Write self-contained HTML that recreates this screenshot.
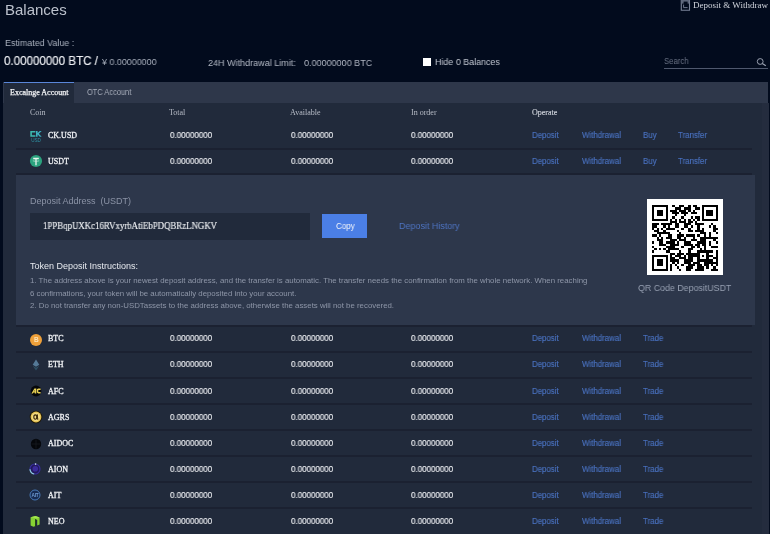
<!DOCTYPE html>
<html><head><meta charset="utf-8">
<style>
*{margin:0;padding:0;box-sizing:border-box}
html,body{width:770px;height:534px;overflow:hidden;background:#020b1d;font-family:"Liberation Sans",sans-serif;color:#c9ced8}
.abs{position:absolute;white-space:nowrap;will-change:transform}
.serif{font-family:"Liberation Serif",serif}
#title{left:4.5px;top:0.6px;font-size:15px;line-height:18px;color:#bcc2cd}
#dw{left:693px;top:0px;font-size:9px;line-height:10px;color:#d0d4dc}
#est{left:5px;top:37.5px;font-size:9.6px;line-height:10px;color:#aab1be;transform:scaleX(0.93);transform-origin:0 0}
#btc{left:4.3px;top:55px;font-size:12.2px;line-height:13px;color:#eef0f4;-webkit-text-stroke:0.15px currentColor;transform:scaleX(0.95);transform-origin:0 0}
#cny{left:102px;top:56.7px;font-size:9.3px;line-height:10px;color:#a7aebb;transform:scaleX(0.96);transform-origin:0 0}
#lim{left:208px;top:57.8px;font-size:9.5px;line-height:10px;color:#b3b9c5;transform:scaleX(0.95);transform-origin:0 0}
#lim2{left:303.6px;top:57.8px;font-size:9.5px;line-height:10px;color:#b3b9c5;transform:scaleX(0.95);transform-origin:0 0}
#chk{left:423px;top:58px;width:8px;height:8px;background:#fff}
#hide{left:435px;top:57.2px;font-size:9.4px;line-height:10px;color:#c3c8d2;transform:scaleX(0.95);transform-origin:0 0}
#search{left:663.5px;top:56.6px;font-size:8.6px;line-height:9px;color:#6a7284;transform:scaleX(0.9);transform-origin:0 0}
#sline{left:663.5px;top:68.2px;width:104px;height:1px;background:#4f586d}
#panel{left:3px;top:82px;width:765px;height:460px;background:#212a3b}
#tabs{left:3px;top:82px;width:765px;height:21px;background:#2e374a}
#tab1{left:4px;top:82px;width:70px;height:21px;background:#212a3b;border-top:1px solid #5a86d8}
.tabt{font-size:8px;line-height:9px}
.bold{-webkit-text-stroke:0.25px currentColor}
.th{font-size:8px;line-height:9px;color:#b7bcc7}
.td{font-size:8.6px;line-height:9px;color:#eceef2;-webkit-text-stroke:0.15px currentColor;transform:scaleX(0.93);transform-origin:0 0}
.coin{font-size:8px;line-height:9px;color:#f0f2f5;-webkit-text-stroke:0.3px currentColor}
.lnk{font-size:8.5px;line-height:9px;color:#4a72c0;-webkit-text-stroke:0.15px currentColor;transform:scaleX(0.925);transform-origin:0 0}
.sep{left:16px;width:736px;height:1.8px;background:#1b2131}
#dep{left:16px;top:175px;width:739px;height:150px;background:#2d374b}
</style></head><body>
<div class="abs" id="title">Balances</div>
<svg class="abs" style="left:680px;top:0px" width="11" height="12" viewBox="0 0 11 12"><path d="M1.3 -1 V10.2 H9.5 V-1" fill="none" stroke="#7a8398" stroke-width="1.1"/><rect x="1.5" y="0" width="7.8" height="3.6" fill="#5d667b"/><rect x="3.6" y="1.6" width="4" height="6.2" fill="#020b1d"/><path d="M3.6 4.6 V7.6 H7.6" fill="none" stroke="#7a8398" stroke-width="0.9"/></svg>
<div class="abs serif" id="dw">Deposit &amp; Withdraw</div>
<div class="abs" id="est">Estimated Value :</div>
<div class="abs" id="btc">0.00000000 BTC /</div>
<div class="abs" id="cny">¥ 0.00000000</div>
<div class="abs" id="lim">24H Withdrawal Limit:</div>
<div class="abs" id="lim2">0.00000000 BTC</div>
<div class="abs" id="chk"></div>
<div class="abs" id="hide">Hide 0 Balances</div>
<div class="abs" id="search">Search</div>
<div class="abs" id="sline"></div>
<svg class="abs" style="left:755px;top:57px" width="12" height="10" viewBox="0 0 12 10"><circle cx="5.2" cy="4.5" r="2.9" fill="none" stroke="#9aa1b0" stroke-width="1"/><path d="M7.3 6.6 L10.8 8.8" stroke="#9aa1b0" stroke-width="1.2"/></svg>

<div class="abs" id="panel"></div>
<div class="abs" style="left:761.5px;top:103px;width:6.5px;height:431px;background:#242c3e"></div>
<div class="abs" id="tabs"></div>
<div class="abs" id="tab1"></div>
<div class="abs serif tabt bold" style="left:10px;top:88.3px;color:#f4f5f7">Excalnge Account</div>
<div class="abs tabt" style="left:86.7px;top:88px;font-size:8.2px;color:#a9afbc;transform:scaleX(0.91);transform-origin:0 0">OTC Account</div>

<div class="abs serif th" style="left:30px;top:108px">Coin</div>
<div class="abs serif th" style="left:169px;top:108.3px">Total</div>
<div class="abs serif th" style="left:290px;top:108px">Available</div>
<div class="abs serif th" style="left:411px;top:108px">In order</div>
<div class="abs serif th" style="left:532px;top:108.3px;color:#d3d7df;-webkit-text-stroke:0.12px currentColor">Operate</div>

<svg class="abs" style="left:28.9px;top:129px" width="14" height="14" viewBox="0 0 14 14"><path d="M6.4 1.9 H1.3 V7.8 H6.4 V6.3 H2.9 V3.4 H6.4 Z" fill="#3cb8ae"/><path d="M7 1.9 H8.6 V4.1 L10.8 1.9 H12.7 L9.8 4.85 L12.7 7.8 H10.8 L8.6 5.6 V7.8 H7 Z" fill="#3cb0c0"/><text x="7" y="12.5" text-anchor="middle" font-family="Liberation Sans" font-size="4.6" fill="#2f92a4" style="-webkit-text-stroke:0.25px #2f92a4">USD</text></svg>
<div class="abs coin serif" style="left:48px;top:131.0px">CK.USD</div>
<div class="abs td" style="left:170px;top:131.0px">0.00000000</div>
<div class="abs td" style="left:290.5px;top:131.0px">0.00000000</div>
<div class="abs td" style="left:411px;top:131.0px">0.00000000</div>
<div class="abs lnk" style="left:531.5px;top:131.0px">Deposit</div>
<div class="abs lnk" style="left:581.5px;top:131.0px">Withdrawal</div>
<div class="abs lnk" style="left:642.5px;top:131.0px">Buy</div>
<div class="abs lnk" style="left:677.5px;top:131.0px">Transfer</div>
<div class="abs sep" style="top:147.6px"></div>
<svg class="abs" style="left:28.700000000000003px;top:154px" width="14" height="14" viewBox="0 0 14 14"><circle cx="7" cy="7" r="6.1" fill="#2ba27e"/><path d="M4.2 4.4 H9.8 M7 4.4 V11.2" stroke="#e8f5ef" stroke-width="1.3"/><ellipse cx="7" cy="6.6" rx="3.1" ry="0.9" fill="none" stroke="#cfeadf" stroke-width="0.5"/></svg>
<div class="abs coin serif" style="left:48px;top:157.0px">USDT</div>
<div class="abs td" style="left:170px;top:157.0px">0.00000000</div>
<div class="abs td" style="left:290.5px;top:157.0px">0.00000000</div>
<div class="abs td" style="left:411px;top:157.0px">0.00000000</div>
<div class="abs lnk" style="left:531.5px;top:157.0px">Deposit</div>
<div class="abs lnk" style="left:581.5px;top:157.0px">Withdrawal</div>
<div class="abs lnk" style="left:642.5px;top:157.0px">Buy</div>
<div class="abs lnk" style="left:677.5px;top:157.0px">Transfer</div>
<div class="abs sep" style="top:172.5px"></div>
<svg class="abs" style="left:28.6px;top:332.6px" width="14" height="14" viewBox="0 0 14 14"><circle cx="7" cy="7" r="6" fill="#eea03a"/><text x="7.3" y="9.4" text-anchor="middle" font-family="Liberation Sans" font-weight="bold" font-size="6.5" fill="#fbe3b8">B</text></svg>
<div class="abs coin serif" style="left:48px;top:334.4px">BTC</div>
<div class="abs td" style="left:170px;top:334.4px">0.00000000</div>
<div class="abs td" style="left:290.5px;top:334.4px">0.00000000</div>
<div class="abs td" style="left:411px;top:334.4px">0.00000000</div>
<div class="abs lnk" style="left:531.5px;top:334.4px">Deposit</div>
<div class="abs lnk" style="left:581.5px;top:334.4px">Withdrawal</div>
<div class="abs lnk" style="left:642.5px;top:334.4px">Trade</div>
<div class="abs sep" style="top:350.9px"></div>
<svg class="abs" style="left:28.799999999999997px;top:358px" width="14" height="14" viewBox="0 0 14 14"><path d="M7 1.5 L10.3 6.8 L7 8.8 L3.7 6.8 Z" fill="#557997"/><path d="M7 9.7 L10.3 7.7 L7 12.6 L3.7 7.7 Z" fill="#2f5166"/></svg>
<div class="abs coin serif" style="left:48px;top:360.47999999999996px">ETH</div>
<div class="abs td" style="left:170px;top:360.47999999999996px">0.00000000</div>
<div class="abs td" style="left:290.5px;top:360.47999999999996px">0.00000000</div>
<div class="abs td" style="left:411px;top:360.47999999999996px">0.00000000</div>
<div class="abs lnk" style="left:531.5px;top:360.47999999999996px">Deposit</div>
<div class="abs lnk" style="left:581.5px;top:360.47999999999996px">Withdrawal</div>
<div class="abs lnk" style="left:642.5px;top:360.47999999999996px">Trade</div>
<div class="abs sep" style="top:376.97999999999996px"></div>
<svg class="abs" style="left:29px;top:384.3px" width="14" height="14" viewBox="0 0 14 14"><circle cx="7" cy="7" r="5.4" fill="#05070a"/><path d="M2.4 9.4 L5.4 4.6 H7.3 V9.4 H5.8 V8.4 H4.5 L3.9 9.4 Z" fill="#e6cf52"/><path d="M5.1 7.3 H5.8 V5.9 Z" fill="#05070a"/><path d="M11.6 4.6 H9.4 Q7.7 4.6 7.7 7 Q7.7 9.4 9.4 9.4 H11.6 V8.1 H9.7 Q9.2 8.1 9.2 7 Q9.2 5.9 9.7 5.9 H11.6 Z" fill="#e6cf52"/></svg>
<div class="abs coin serif" style="left:48px;top:386.55999999999995px">AFC</div>
<div class="abs td" style="left:170px;top:386.55999999999995px">0.00000000</div>
<div class="abs td" style="left:290.5px;top:386.55999999999995px">0.00000000</div>
<div class="abs td" style="left:411px;top:386.55999999999995px">0.00000000</div>
<div class="abs lnk" style="left:531.5px;top:386.55999999999995px">Deposit</div>
<div class="abs lnk" style="left:581.5px;top:386.55999999999995px">Withdrawal</div>
<div class="abs lnk" style="left:642.5px;top:386.55999999999995px">Trade</div>
<div class="abs sep" style="top:403.05999999999995px"></div>
<svg class="abs" style="left:28.5px;top:410.3px" width="14" height="14" viewBox="0 0 14 14"><circle cx="7" cy="7" r="6.3" fill="#1e1806"/><circle cx="7" cy="7" r="5.4" fill="#e6c458"/><circle cx="7" cy="7" r="4" fill="#f3dc86"/><ellipse cx="6.3" cy="7.1" rx="1.5" ry="2.2" fill="none" stroke="#3a2608" stroke-width="1.1"/><path d="M8.4 4.4 C8.2 6.5 8.2 8 8.9 9.8" fill="none" stroke="#3a2608" stroke-width="1.1"/></svg>
<div class="abs coin serif" style="left:48px;top:412.64px">AGRS</div>
<div class="abs td" style="left:170px;top:412.64px">0.00000000</div>
<div class="abs td" style="left:290.5px;top:412.64px">0.00000000</div>
<div class="abs td" style="left:411px;top:412.64px">0.00000000</div>
<div class="abs lnk" style="left:531.5px;top:412.64px">Deposit</div>
<div class="abs lnk" style="left:581.5px;top:412.64px">Withdrawal</div>
<div class="abs lnk" style="left:642.5px;top:412.64px">Trade</div>
<div class="abs sep" style="top:429.14px"></div>
<svg class="abs" style="left:28.5px;top:436.5px" width="14" height="14" viewBox="0 0 14 14"><circle cx="7" cy="7" r="5.2" fill="#05070b"/><path d="M7 2.5 V11.5 M2.5 7 H11.5" stroke="#1a1c24" stroke-width="0.7"/></svg>
<div class="abs coin serif" style="left:48px;top:438.71999999999997px">AIDOC</div>
<div class="abs td" style="left:170px;top:438.71999999999997px">0.00000000</div>
<div class="abs td" style="left:290.5px;top:438.71999999999997px">0.00000000</div>
<div class="abs td" style="left:411px;top:438.71999999999997px">0.00000000</div>
<div class="abs lnk" style="left:531.5px;top:438.71999999999997px">Deposit</div>
<div class="abs lnk" style="left:581.5px;top:438.71999999999997px">Withdrawal</div>
<div class="abs lnk" style="left:642.5px;top:438.71999999999997px">Trade</div>
<div class="abs sep" style="top:455.21999999999997px"></div>
<svg class="abs" style="left:28.299999999999997px;top:462.2px" width="14" height="14" viewBox="0 0 14 14"><circle cx="7" cy="7" r="5" fill="#221a5c" stroke="#3a2ea0" stroke-width="1.1"/><circle cx="7.3" cy="6.8" r="2.8" fill="#3b2b9a"/><path d="M2 7.2 A5.1 5.1 0 0 0 6.2 12" fill="none" stroke="#8fd2dc" stroke-width="1.2"/><circle cx="7.6" cy="2.1" r="0.8" fill="#cfe6ee"/></svg>
<div class="abs coin serif" style="left:48px;top:464.79999999999995px">AION</div>
<div class="abs td" style="left:170px;top:464.79999999999995px">0.00000000</div>
<div class="abs td" style="left:290.5px;top:464.79999999999995px">0.00000000</div>
<div class="abs td" style="left:411px;top:464.79999999999995px">0.00000000</div>
<div class="abs lnk" style="left:531.5px;top:464.79999999999995px">Deposit</div>
<div class="abs lnk" style="left:581.5px;top:464.79999999999995px">Withdrawal</div>
<div class="abs lnk" style="left:642.5px;top:464.79999999999995px">Trade</div>
<div class="abs sep" style="top:481.29999999999995px"></div>
<svg class="abs" style="left:28.200000000000003px;top:488.3px" width="14" height="14" viewBox="0 0 14 14"><circle cx="7" cy="7" r="5" fill="#172b52" stroke="#4878b6" stroke-width="1"/><text x="7" y="8.8" text-anchor="middle" font-family="Liberation Sans" font-weight="bold" font-size="4.8" fill="#6f9ad0" letter-spacing="-0.3">AIT</text></svg>
<div class="abs coin serif" style="left:48px;top:490.88px">AIT</div>
<div class="abs td" style="left:170px;top:490.88px">0.00000000</div>
<div class="abs td" style="left:290.5px;top:490.88px">0.00000000</div>
<div class="abs td" style="left:411px;top:490.88px">0.00000000</div>
<div class="abs lnk" style="left:531.5px;top:490.88px">Deposit</div>
<div class="abs lnk" style="left:581.5px;top:490.88px">Withdrawal</div>
<div class="abs lnk" style="left:642.5px;top:490.88px">Trade</div>
<div class="abs sep" style="top:507.38px"></div>
<svg class="abs" style="left:28.4px;top:514.1px" width="14" height="14" viewBox="0 0 14 14"><path d="M2.6 3.2 L7.5 1.9 L11.6 3.6 V10.6 L9.2 11.4 V6 L7.8 5.2 V12 L5.4 12.7 L2.6 11.6 Z" fill="#86d234"/><path d="M2.6 3.2 L7.5 1.9 L11.6 3.6 L8.8 4.6 Z" fill="#a4e64e"/><path d="M7.8 5.2 V12 L7 12.2 V5 Z" fill="#0f2a10"/></svg>
<div class="abs coin serif" style="left:48px;top:516.9599999999999px">NEO</div>
<div class="abs td" style="left:170px;top:516.9599999999999px">0.00000000</div>
<div class="abs td" style="left:290.5px;top:516.9599999999999px">0.00000000</div>
<div class="abs td" style="left:411px;top:516.9599999999999px">0.00000000</div>
<div class="abs lnk" style="left:531.5px;top:516.9599999999999px">Deposit</div>
<div class="abs lnk" style="left:581.5px;top:516.9599999999999px">Withdrawal</div>
<div class="abs lnk" style="left:642.5px;top:516.9599999999999px">Trade</div>

<div class="abs" id="dep"></div>
<div class="abs sep" style="top:325px"></div>
<div class="abs" style="left:30px;top:196px;font-size:9px;line-height:10px;color:#8b93a6">Deposit Address&nbsp;&nbsp;(USDT)</div>
<div class="abs" style="left:30.4px;top:212.7px;width:279.5px;height:27px;background:#212a3b"></div>
<div class="abs serif" style="-webkit-text-stroke:0.15px currentColor;left:42.7px;top:221.2px;font-size:9.5px;line-height:10px;color:#eef0f3;transform:scaleX(0.93);transform-origin:0 0">1PPBqpUXKc16RVxyrbAtiEbPDQBRzLNGKV</div>
<div class="abs" style="left:322px;top:214px;width:45px;height:24.4px;background:#4b7fe6"></div>
<div class="abs" style="left:335.8px;top:221.5px;font-size:8.6px;line-height:9px;color:#f4f6fa;transform:scaleX(0.93);transform-origin:0 0">Copy</div>
<div class="abs" style="left:398.5px;top:221.4px;font-size:9.4px;line-height:10px;color:#4e74c2;transform:scaleX(0.955);transform-origin:0 0">Deposit History</div>
<div class="abs" style="left:30px;top:261px;font-size:9px;line-height:10px;color:#e6e9ee">Token Deposit Instructions:</div>
<div class="abs" style="left:30px;top:276px;font-size:7.85px;line-height:9px;color:#8e96a8">1. The address above is your newest deposit address, and the transfer is automatic. The transfer needs the confirmation from the whole network. When reaching</div>
<div class="abs" style="left:30px;top:289px;font-size:7.85px;line-height:9px;color:#8e96a8">6 confirmations, your token will be automatically deposited into your account.</div>
<div class="abs" style="left:30px;top:301px;font-size:7.85px;line-height:9px;color:#8e96a8">2. Do not transfer any non-USDTassets to the address above, otherwise the assets will not be recovered.</div>
<div class="abs" style="left:646.7px;top:199.4px;width:75.8px;height:75.7px;background:#fff"></div>
<svg class="abs" style="left:652.2px;top:205px" width="65.8" height="65.8" viewBox="0 0 29 29" shape-rendering="crispEdges"><path d="M0 0h7v1h-7zM9 0h1v1h-1zM12 0h2v1h-2zM16 0h1v1h-1zM18 0h2v1h-2zM22 0h7v1h-7zM0 1h1v1h-1zM6 1h1v1h-1zM10 1h3v1h-3zM14 1h3v1h-3zM19 1h2v1h-2zM22 1h1v1h-1zM28 1h1v1h-1zM0 2h1v1h-1zM2 2h3v1h-3zM6 2h1v1h-1zM8 2h3v1h-3zM12 2h3v1h-3zM16 2h1v1h-1zM18 2h1v1h-1zM22 2h1v1h-1zM24 2h3v1h-3zM28 2h1v1h-1zM0 3h1v1h-1zM2 3h3v1h-3zM6 3h1v1h-1zM9 3h3v1h-3zM13 3h3v1h-3zM17 3h3v1h-3zM22 3h1v1h-1zM24 3h3v1h-3zM28 3h1v1h-1zM0 4h1v1h-1zM2 4h3v1h-3zM6 4h1v1h-1zM10 4h1v1h-1zM14 4h1v1h-1zM22 4h1v1h-1zM24 4h3v1h-3zM28 4h1v1h-1zM0 5h1v1h-1zM6 5h1v1h-1zM9 5h1v1h-1zM13 5h1v1h-1zM17 5h1v1h-1zM19 5h2v1h-2zM22 5h1v1h-1zM28 5h1v1h-1zM0 6h7v1h-7zM8 6h1v1h-1zM10 6h1v1h-1zM12 6h1v1h-1zM14 6h1v1h-1zM16 6h1v1h-1zM18 6h1v1h-1zM20 6h1v1h-1zM22 6h7v1h-7zM8 7h3v1h-3zM12 7h3v1h-3zM16 7h2v1h-2zM19 7h1v1h-1zM0 8h3v1h-3zM4 8h5v1h-5zM10 8h2v1h-2zM14 8h3v1h-3zM19 8h4v1h-4zM26 8h1v1h-1zM0 9h2v1h-2zM5 9h1v1h-1zM7 9h1v1h-1zM10 9h2v1h-2zM14 9h2v1h-2zM17 9h1v1h-1zM20 9h1v1h-1zM25 9h1v1h-1zM27 9h1v1h-1zM0 10h1v1h-1zM2 10h1v1h-1zM4 10h1v1h-1zM6 10h4v1h-4zM13 10h1v1h-1zM16 10h1v1h-1zM20 10h1v1h-1zM22 10h1v1h-1zM27 10h2v1h-2zM1 11h2v1h-2zM5 11h1v1h-1zM11 11h1v1h-1zM16 11h2v1h-2zM19 11h4v1h-4zM27 11h1v1h-1zM2 12h6v1h-6zM12 12h1v1h-1zM21 12h3v1h-3zM25 12h1v1h-1zM28 12h1v1h-1zM0 13h2v1h-2zM3 13h1v1h-1zM7 13h2v1h-2zM11 13h3v1h-3zM15 13h4v1h-4zM20 13h1v1h-1zM23 13h1v1h-1zM25 13h1v1h-1zM2 14h1v1h-1zM4 14h1v1h-1zM6 14h3v1h-3zM11 14h2v1h-2zM14 14h1v1h-1zM18 14h1v1h-1zM21 14h8v1h-8zM2 15h3v1h-3zM8 15h3v1h-3zM12 15h3v1h-3zM17 15h3v1h-3zM21 15h3v1h-3zM27 15h1v1h-1zM0 16h1v1h-1zM3 16h2v1h-2zM6 16h4v1h-4zM11 16h1v1h-1zM14 16h3v1h-3zM20 16h4v1h-4zM25 16h1v1h-1zM28 16h1v1h-1zM3 17h3v1h-3zM8 17h4v1h-4zM14 17h4v1h-4zM19 17h2v1h-2zM22 17h2v1h-2zM25 17h1v1h-1zM0 18h1v1h-1zM6 18h4v1h-4zM13 18h1v1h-1zM17 18h2v1h-2zM20 18h1v1h-1zM23 18h1v1h-1zM26 18h3v1h-3zM1 19h1v1h-1zM3 19h1v1h-1zM5 19h1v1h-1zM7 19h5v1h-5zM16 19h2v1h-2zM21 19h1v1h-1zM23 19h1v1h-1zM0 20h1v1h-1zM6 20h2v1h-2zM12 20h1v1h-1zM16 20h1v1h-1zM20 20h7v1h-7zM28 20h1v1h-1zM8 21h2v1h-2zM11 21h3v1h-3zM15 21h6v1h-6zM24 21h1v1h-1zM28 21h1v1h-1zM0 22h7v1h-7zM8 22h1v1h-1zM10 22h3v1h-3zM14 22h1v1h-1zM16 22h5v1h-5zM22 22h1v1h-1zM24 22h3v1h-3zM28 22h1v1h-1zM0 23h1v1h-1zM6 23h1v1h-1zM8 23h2v1h-2zM12 23h3v1h-3zM16 23h2v1h-2zM20 23h1v1h-1zM24 23h1v1h-1zM27 23h2v1h-2zM0 24h1v1h-1zM2 24h3v1h-3zM6 24h1v1h-1zM8 24h4v1h-4zM14 24h4v1h-4zM20 24h7v1h-7zM28 24h1v1h-1zM0 25h1v1h-1zM2 25h3v1h-3zM6 25h1v1h-1zM9 25h1v1h-1zM11 25h1v1h-1zM14 25h3v1h-3zM18 25h3v1h-3zM23 25h6v1h-6zM0 26h1v1h-1zM2 26h3v1h-3zM6 26h1v1h-1zM8 26h1v1h-1zM10 26h1v1h-1zM13 26h1v1h-1zM16 26h3v1h-3zM20 26h2v1h-2zM23 26h2v1h-2zM26 26h1v1h-1zM28 26h1v1h-1zM0 27h1v1h-1zM6 27h1v1h-1zM8 27h1v1h-1zM11 27h1v1h-1zM15 27h3v1h-3zM20 27h3v1h-3zM24 27h1v1h-1zM27 27h1v1h-1zM0 28h7v1h-7zM8 28h1v1h-1zM12 28h1v1h-1zM15 28h2v1h-2zM19 28h4v1h-4zM26 28h3v1h-3z" fill="#000"/></svg>
<div class="abs" style="left:637.8px;top:282.6px;font-size:9.5px;line-height:10px;color:#97a0b2;transform:scaleX(0.93);transform-origin:0 0">QR Code DepositUSDT</div>
</body></html>
